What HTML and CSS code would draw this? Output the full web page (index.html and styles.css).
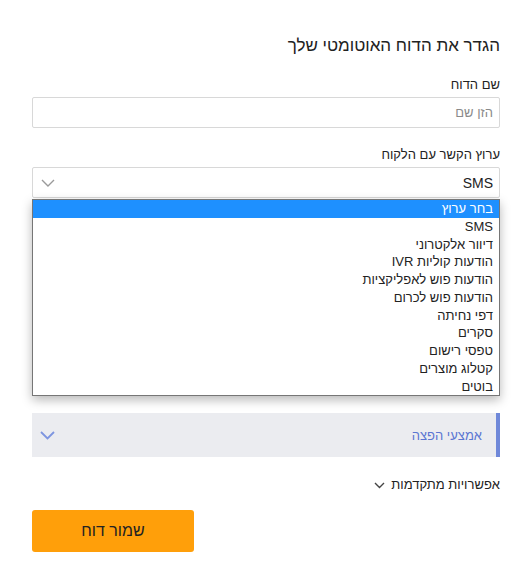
FILE: index.html
```html
<!DOCTYPE html>
<html lang="he" dir="rtl">
<head>
<meta charset="utf-8">
<title>הגדר את הדוח האוטומטי שלך</title>
<link rel="stylesheet" href="styles.css">
</head>
<body>
<main class="page">
  <h2 class="title">הגדר את הדוח האוטומטי שלך</h2>

  <div class="field">
    <label class="label">שם הדוח</label>
    <div class="input"><span class="placeholder">הזן שם</span></div>
  </div>

  <div class="field field-select">
    <label class="label">ערוץ הקשר עם הלקוח</label>
    <div class="select">
      <span class="select-value">SMS</span>
      <svg class="chev chev-gray" width="14" height="8" viewBox="0 0 14 8"><path d="M1 1l6 6 6-6" fill="none" stroke="#9a9a9a" stroke-width="1.4"/></svg>
      <ul class="listbox">
        <li class="opt opt-active">בחר ערוץ</li>
        <li class="opt">SMS</li>
        <li class="opt">דיוור אלקטרוני</li>
        <li class="opt">הודעות קוליות IVR</li>
        <li class="opt">הודעות פוש לאפליקציות</li>
        <li class="opt">הודעות פוש לכרום</li>
        <li class="opt">דפי נחיתה</li>
        <li class="opt">סקרים</li>
        <li class="opt">טפסי רישום</li>
        <li class="opt">קטלוג מוצרים</li>
        <li class="opt">בוטים</li>
      </ul>
    </div>
  </div>

  <div class="accordion">
    <span class="acc-title">אמצעי הפצה</span>
    <svg class="chev" width="15" height="9" viewBox="0 0 15 9"><path d="M1 1l6.5 6.5L14 1" fill="none" stroke="#7d95e0" stroke-width="1.8"/></svg>
  </div>

  <div class="advanced">
    <span>אפשרויות מתקדמות</span>
    <svg class="chev" width="11" height="7" viewBox="0 0 11 7"><path d="M1 1l4.5 4.5L10 1" fill="none" stroke="#444" stroke-width="1.4"/></svg>
  </div>

  <button class="save">שמור דוח</button>
</main>
</body>
</html>
```

FILE: styles.css
```css
html, body {
  margin: 0;
  padding: 0;
  background: #fff;
}
body {
  font-family: "Liberation Sans", Arial, "DejaVu Sans", sans-serif;
  color: #222;
}
.page {
  padding: 35px 26px 0 32px;
  display: flex;
  flex-direction: column;
}
.title {
  margin: 0;
  font-size: 17px;
  font-weight: normal;
  line-height: 22px;
  color: #222;
}
.field {
  display: flex;
  flex-direction: column;
  margin-top: 20px;
}
.field-select {
  margin-top: 19px;
}
.label {
  font-size: 13px;
  line-height: 16px;
  color: #222;
  margin-bottom: 4px;
}
.input, .select {
  box-sizing: border-box;
  height: 31px;
  border: 1px solid #d8d8d8;
  border-radius: 2px;
  display: flex;
  align-items: center;
  padding: 0 6px;
  font-size: 14px;
}
.placeholder {
  color: #8a8a8a;
  font-size: 13px;
}
.select {
  position: relative;
  justify-content: space-between;
  padding-left: 8px;
}
.select-value {
  color: #222;
}
.listbox {
  position: absolute;
  top: 31px;
  left: -1px;
  right: -1px;
  margin: 0;
  padding: 0;
  list-style: none;
  background: #fff;
  border: 1px solid #767676;
  box-shadow: 0 4px 10px rgba(0, 0, 0, 0.28);
  z-index: 2;
}
.opt {
  height: 17.75px;
  line-height: 17.75px;
  padding: 0 6px;
  font-size: 13px;
  color: #222;
}
.opt-active {
  background: #1e90ff;
  color: #fff;
}
.accordion {
  margin-top: 215px;
  height: 44px;
  box-sizing: border-box;
  background: #ebecf0;
  border-right: 4px solid #6f88d9;
  display: flex;
  align-items: center;
  justify-content: space-between;
  padding: 0 14px 0 8px;
}
.acc-title {
  font-size: 13px;
  color: #5b76d2;
}
.advanced {
  margin-top: 20px;
  display: flex;
  align-items: center;
  gap: 6px;
  font-size: 13px;
  line-height: 16px;
  color: #222;
}
.save {
  margin-top: 17px;
  align-self: flex-end;
  width: 162px;
  height: 42px;
  border: none;
  border-radius: 3px;
  background: #ff9f0a;
  color: #222;
  font-family: inherit;
  font-size: 16px;
}
```
